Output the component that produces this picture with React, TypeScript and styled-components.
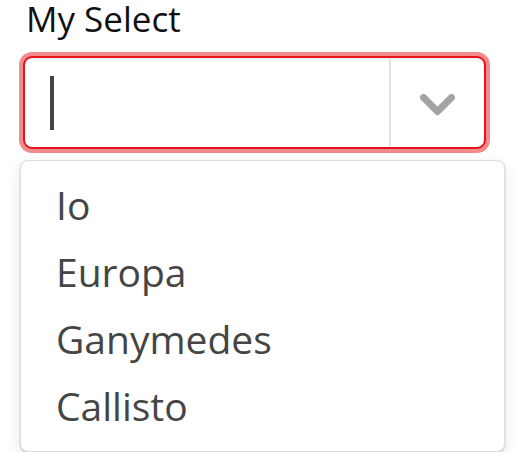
import React from 'react';
import styled, { createGlobalStyle } from 'styled-components';

const GlobalStyle = createGlobalStyle`
  html, body {
    margin: 0;
    padding: 0;
    background: #ffffff;
  }
  body {
    font-family: "Open Sans", "Noto Sans", sans-serif;
  }
`;

const OPTIONS = ['Io', 'Europa', 'Ganymedes', 'Callisto'];

export default function App() {
  return (
    <React.Fragment>
      <GlobalStyle />
      <Page>
        <Label>My Select</Label>
        <Control>
          <ValueArea>
            <Caret />
          </ValueArea>
          <Separator />
          <Indicator>
            <svg width="35" height="22" viewBox="0 0 35 22">
              <polyline
                points="3.5,3.5 17.5,17.5 31.5,3.5"
                fill="none"
                stroke="#a3a3a3"
                strokeWidth="7"
                strokeLinecap="round"
                strokeLinejoin="round"
              />
            </svg>
          </Indicator>
        </Control>
        <Menu>
          {OPTIONS.map(item => (
            <Option key={item}>{item}</Option>
          ))}
        </Menu>
      </Page>
    </React.Fragment>
  );
}

const Page = styled.div`
  display: flex;
  flex-direction: column;
  padding: 0 0 0 20px;
`;

const Label = styled.div`
  margin-left: 6px;
  font-size: 35px;
  line-height: 38px;
  color: #111111;
`;

const Control = styled.div`
  display: flex;
  align-items: stretch;
  box-sizing: border-box;
  width: 463px;
  height: 93px;
  margin: 18px 0 0 3px;
  border: 2px solid #e3151b;
  border-radius: 9px;
  box-shadow: 0 0 0 4px #f28b8b, inset 0 2px 2px rgba(0, 0, 0, 0.05);
  background: #ffffff;
`;

const ValueArea = styled.div`
  flex: 1;
  display: flex;
  align-items: center;
  padding-left: 25px;
`;

const Caret = styled.span`
  display: block;
  width: 4px;
  height: 54px;
  background: #444444;
`;

const Separator = styled.div`
  width: 2px;
  margin: 1px 0;
  background: #e2e2e2;
`;

const Indicator = styled.div`
  width: 93px;
  display: flex;
  align-items: center;
  justify-content: center;
  padding-top: 4px;
  box-sizing: border-box;
`;

const Menu = styled.div`
  box-sizing: border-box;
  width: 485px;
  margin-top: 11px;
  padding: 10px 0 12px 35px;
  border: 1px solid #dddddd;
  border-radius: 8px;
  background: #ffffff;
  box-shadow: 0 1px 2px rgba(0, 0, 0, 0.18), 0 6px 16px rgba(0, 0, 0, 0.1);
`;

const Option = styled.div`
  font-size: 39px;
  line-height: 67px;
  color: #454545;
`;
